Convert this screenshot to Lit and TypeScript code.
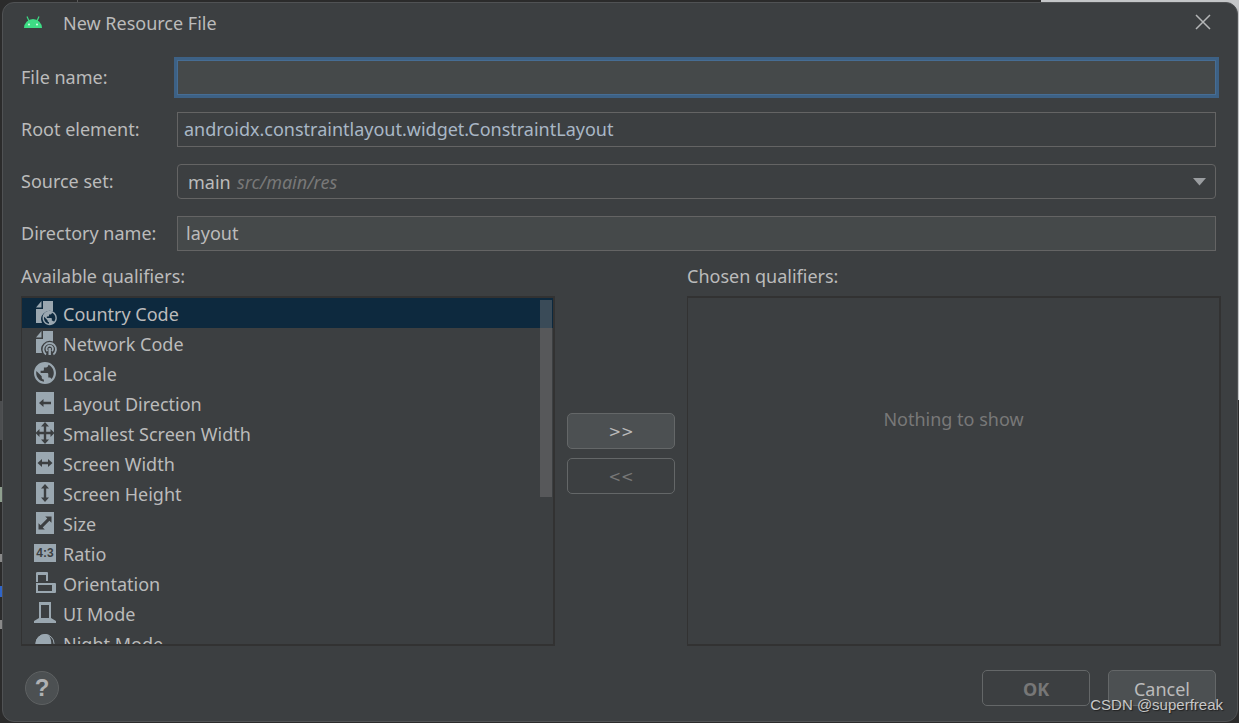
import { LitElement, html, css, svg, TemplateResult } from "lit";
import { customElement, state } from "lit/decorators.js";
import { classMap } from "lit/directives/class-map.js";

const GLOBE =
  "M12 1C5.9 1 1 5.9 1 12s4.900 11 11 11 11-4.900 11-11S18.100 1 12 1zM10.900 20.700C6.500 20.200 3.200 16.500 3.200 12c0-.7.1-1.300.2-2L8.700 15.300v1.100c0 1.200 1 2.200 2.200 2.200zM18.500 17.900c-.3-.9-1.100-1.500-2.100-1.500h-1.100v-3.300c0-.6-.5-1.100-1.100-1.100H7.600V9.800h2.200c.6 0 1.100-.5 1.100-1.100V6.500h2.200c1.200 0 2.200-1 2.200-2.200v-.5c3.200 1.300 5.500 4.500 5.500 8.200 0 2.300-.9 4.400-2.300 5.900z";

const sheet = svg`
  <path d="M10 0h10v10.500A8.500 8.500 0 0 0 9 22H3V8h7z" />
  <path d="M3 6.500 8.500 0v6.500z" />`;
const tile = svg`<path d="M3 1h18v22H3z" />`;

const ICONS: Record<string, TemplateResult> = {
  country: svg`${sheet}<g transform="translate(8.900 9.200) scale(.65)"><path d="${GLOBE}" /></g>`,
  network: svg`${sheet}
    <path class="line" d="M13 23.400a6.300 6.300 0 1 1 7.400 0" />
    <path class="line" d="M14.500 20.200a3.200 3.200 0 1 1 4.400 0" />
    <path d="M15.500 17h2.400v7h-2.400z" />`,
  locale: svg`<path d="${GLOBE}" />`,
  direction: svg`${tile}<path class="ink" d="M6 12l4.500-4v2.800H18v2.400h-7.500V16z" />`,
  smallest: svg`${tile}<path class="ink" d="M12 1l4 4.500h-2.800v5.300h4.300V8L21.500 12l-4 4v-2.800h-4.300v5.300H16L12 23l-4-4.500h2.800v-5.300H6.500V16l-4-4 4-4v2.800h4.300V5.500H8z" />`,
  width: svg`${tile}<path class="ink" d="M4.500 12L9 8v2.800h6V8l4.500 4-4.500 4v-2.800H9V16z" />`,
  height: svg`${tile}<path class="ink" d="M12 3l4 4.500h-2.800v9H16L12 21l-4-4.500h2.800v-9H8z" />`,
  size: svg`${tile}<path class="ink" d="M18.500 5.500v6.300l-2.100-2.100-6.700 6.700 2.100 2.100H5.500v-6.300l2.100 2.100 6.700-6.700-2.100-2.100z" />`,
  ratio: svg`<path d="M1 3h22v18H1z" /><text class="digits" x="12" y="16" text-anchor="middle">4:3</text>`,
  orientation: svg`<path fill-rule="evenodd" d="M4.500 1h9.500q1 0 1 1v9H3V2q0-1 1.500-1zM5 4v7h8V4z" />
    <path class="gap" d="M7 10h10v4H7z" />
    <path fill-rule="evenodd" d="M3 12h19q1 0 1 1v8q0 1-1 1H3zM5 14v6h14v-6z" />`,
  uimode: svg`<path fill-rule="evenodd" d="M6 1h12v16l5 3v2H1v-2l5-3zM8 4v13h8V4z" />`,
  night: svg`<path d="M12 3a9.500 9.500 0 0 0 0 19c2 0 3-.5 4-1.500 3-4 3-12 0-16C15 3.500 14 3 12 3z" />
    <circle cx="12" cy="12.500" r="9" class="line thin" />`,
};

const QUALIFIERS: [string, string][] = [
  ["country", "Country Code"],
  ["network", "Network Code"],
  ["locale", "Locale"],
  ["direction", "Layout Direction"],
  ["smallest", "Smallest Screen Width"],
  ["width", "Screen Width"],
  ["height", "Screen Height"],
  ["size", "Size"],
  ["ratio", "Ratio"],
  ["orientation", "Orientation"],
  ["uimode", "UI Mode"],
  ["night", "Night Mode"],
];

@customElement("app-root")
export class AppRoot extends LitElement {
  @state() private selected = 0;

  static styles = css`
    :host {
      display: flex;
      box-sizing: border-box;
      position: relative;
      min-height: 100vh;
      height: 100vh;
      padding: 2px 1px 1px 2px;
      background:
        linear-gradient(#c4c6c8, #c4c6c8) right top / 16% 400px no-repeat,
        linear-gradient(#5a5a5a, #5a5a5a) 77px 0 / 1px 2px no-repeat,
        linear-gradient(#4b4d4f, #4b4d4f) 0 401px / 2px 39px no-repeat,
        linear-gradient(#8fa08f, #8fa08f) 0 487px / 2px 15px no-repeat,
        linear-gradient(#8a8a8a, #8a8a8a) 0 554px / 2px 8px no-repeat,
        linear-gradient(#2f65ca, #2f65ca) 0 586px / 2px 11px no-repeat,
        linear-gradient(#8a8a8a, #8a8a8a) 0 620px / 2px 9px no-repeat,
        #2b2b2b;
      color: #bbbbbb;
      font: 18px/24px "Noto Sans", "Open Sans", sans-serif;
    }
    * { box-sizing: border-box; }
    button, input, select { font: inherit; color: inherit; margin: 0; }
    .dialog {
      flex: 1;
      min-width: 0;
      display: flex;
      flex-direction: column;
      background: #3c3f41;
      border: 1px solid #505254;
      border-radius: 12px;
      overflow: hidden;
    }
    .titlebar {
      display: flex;
      align-items: center;
      height: 40px;
      padding: 0 25px 0 20px;
    }
    .titlebar h1 { flex: 1; margin: 0 0 0 20px; font: inherit; }
    .droid { width: 20px; height: 14px; margin-top: -3px; }
    .close {
      display: flex;
      padding: 0;
      border: 0;
      background: none;
      margin-top: -2px;
    }
    .close svg { width: 18px; height: 18px; stroke: #b4b6b7; stroke-width: 1.5; fill: none; }
    .form {
      display: grid;
      grid-template-columns: 156px minmax(0, 1fr);
      row-gap: 17px;
      align-items: center;
      padding: 17px 21px 0 18px;
    }
    .form label { padding-bottom: 2px; }
    .field {
      display: block;
      width: 100%;
      height: 35px;
      padding: 0 8px 2px;
      border: 1px solid #646464;
      border-radius: 0;
      outline: 0;
      background: #45494a;
    }
    .field.name { border-color: #466d94; box-shadow: 0 0 0 3px #3d6185; }
    .field.root { padding: 0 6px 2px; background: #3c3f41; color: #a9b7c6; }
    .combo { display: grid; align-items: center; }
    .combo > * { grid-area: 1 / 1; }
    .combo select {
      appearance: none;
      padding: 0 10px;
      border-radius: 4px;
      background: #3c3f41;
    }
    .combo .hint { margin-left: 60px; color: #787878; font-style: italic; pointer-events: none; }
    .combo svg {
      justify-self: end;
      margin-right: 10px;
      width: 13px;
      height: 8px;
      fill: #9a9da0;
      pointer-events: none;
    }
    .panes {
      flex: 1;
      min-height: 0;
      display: grid;
      grid-template-columns: minmax(0, 1fr) 108px minmax(0, 1fr);
      grid-template-rows: 24px minmax(0, 1fr);
      column-gap: 12px;
      row-gap: 8px;
      padding: 13px 16px 0 18px;
    }
    .panes h2 { margin: 0; font: inherit; }
    .chosen-title { grid-column: 3; }
    .box {
      position: relative;
      border: 2px solid #323232;
      border-left-width: 1px;
      overflow: hidden;
    }
    .list { list-style: none; margin: 0; padding: 0; height: 100%; overflow: hidden; }
    .item {
      display: flex;
      align-items: center;
      gap: 6px;
      height: 30px;
      padding-left: 11px;
      white-space: nowrap;
      --row: #3c3f41;
    }
    .item span { padding-top: 2px; }
    .item.on { background: #0d293e; --row: #0d293e; }
    .icon { flex: none; width: 24px; height: 24px; fill: #9aa7b0; overflow: visible; }
    .icon .ink { fill: #3c3f41; }
    .icon .gap { fill: var(--row); }
    .icon .line { fill: none; stroke: #9aa7b0; stroke-width: 1.8; }
    .icon .thin { stroke-width: 1; }
    .icon .digits { fill: #3c3f41; font: bold 12px "Liberation Sans", sans-serif; }
    .thumb {
      position: absolute;
      top: 2px;
      right: 1px;
      width: 12px;
      height: 57%;
      background: rgba(128, 128, 128, 0.4);
    }
    .empty {
      margin: 0;
      padding-top: 109px;
      text-align: center;
      color: #787878;
    }
    .movers {
      display: flex;
      flex-direction: column;
      gap: 9px;
      padding-top: 117px;
    }
    .btn {
      display: flex;
      align-items: center;
      justify-content: center;
      width: 108px;
      height: 36px;
      padding: 2px 0 0;
      border: 1px solid #646768;
      border-radius: 5px;
      background: #4c5052;
    }
    .btn:disabled { background: #3c3f41; color: #777777; }
    .movers .btn { font: 15px/24px "DejaVu Sans", sans-serif; }
    .footer {
      display: flex;
      align-items: center;
      gap: 18px;
      padding: 24px 21px 15px 22px;
    }
    .help {
      width: 34px;
      height: 34px;
      padding: 0;
      margin-right: auto;
      border: 1px solid #5e6162;
      border-radius: 50%;
      background: #4c5052;
      color: #afb1b3;
      font: bold 24px/32px "Liberation Sans", sans-serif;
    }
    .ok { font-weight: 700; }
    .mark {
      position: absolute;
      right: 16px;
      bottom: 9px;
      font: 15px/18px "Liberation Sans", sans-serif;
      color: #c8c8c8;
      text-shadow: 1px 1px 1px #222222;
      pointer-events: none;
    }
  `;

  render() {
    return html`
      <div class="dialog" role="dialog" aria-labelledby="title">
        <header class="titlebar">
          <svg class="droid" viewBox="0 0 20 14" aria-hidden="true">
            <path d="M1 13a9 9 0 0 1 18 0z" fill="#3ddc84" />
            <path d="M6 6 4 1.500M14 6l2-4.500" stroke="#3ddc84" stroke-width="1.200" />
            <circle cx="6" cy="9.500" r=".9" fill="#e8fff2" />
            <circle cx="14" cy="9.500" r=".9" fill="#e8fff2" />
          </svg>
          <h1 id="title">New Resource File</h1>
          <button class="close" aria-label="Close">
            <svg viewBox="0 0 18 18"><path d="M2 2l14 14M16 2L2 16" /></svg>
          </button>
        </header>

        <div class="form">
          <label for="name">File name:</label>
          <input id="name" class="field name" type="text" />
          <label for="root">Root element:</label>
          <input id="root" class="field root" type="text" value="androidx.constraintlayout.widget.ConstraintLayout" />
          <label for="source">Source set:</label>
          <div class="combo">
            <select id="source" class="field"><option>main</option></select>
            <span class="hint">src/main/res</span>
            <svg viewBox="0 0 13 8" aria-hidden="true"><path d="M0 0h13L6.500 7.500z" /></svg>
          </div>
          <label for="dir">Directory name:</label>
          <input id="dir" class="field" type="text" value="layout" />
        </div>

        <div class="panes">
          <h2 id="available">Available qualifiers:</h2>
          <h2 class="chosen-title">Chosen qualifiers:</h2>
          <div class="box">
            <ul class="list" role="listbox" aria-labelledby="available">
              ${QUALIFIERS.map(
                ([icon, label], i) => html`
                  <li
                    class=${classMap({ item: true, on: i === this.selected })}
                    role="option"
                    aria-selected=${i === this.selected ? "true" : "false"}
                    @click=${() => (this.selected = i)}
                  >
                    <svg class="icon" viewBox="0 0 24 24" aria-hidden="true">${ICONS[icon]}</svg>
                    <span>${label}</span>
                  </li>
                `
              )}
            </ul>
            <div class="thumb"></div>
          </div>
          <div class="movers">
            <button class="btn" aria-label="Add qualifier">&gt;&gt;</button>
            <button class="btn" aria-label="Remove qualifier" disabled>&lt;&lt;</button>
          </div>
          <div class="box"><p class="empty">Nothing to show</p></div>
        </div>

        <footer class="footer">
          <button class="help" aria-label="Help">?</button>
          <button class="btn ok" disabled>OK</button>
          <button class="btn">Cancel</button>
        </footer>
      </div>
      <span class="mark">CSDN @superfreak</span>
    `;
  }
}
